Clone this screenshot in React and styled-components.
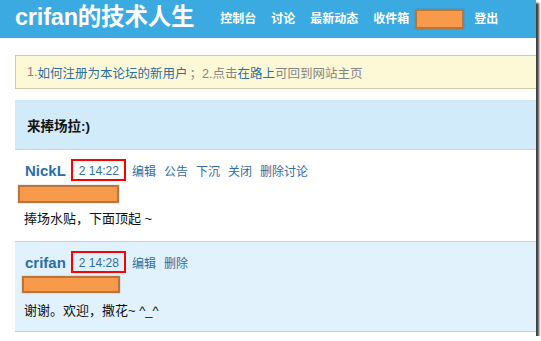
import React from 'react'
import styled, { createGlobalStyle } from 'styled-components'

const GlobalStyle = createGlobalStyle`
  html, body {
    margin: 0;
    padding: 0;
    background: #fff;
  }
  body {
    font-family: "Liberation Sans", "Noto Sans CJK SC", sans-serif;
  }
`

const Frame = styled.div`
  width: 536px;
  height: 336px;
  overflow: hidden;
  background: #fff;
  box-shadow: 3px 3px 2px rgba(0, 0, 0, 0.75);
`

const Header = styled.header`
  height: 38px;
  background: #3aaae1;
  display: flex;
  align-items: center;
  padding-left: 15px;
  color: #fff;
`

const Brand = styled.div`
  font-size: 23.5px;
  font-weight: bold;
  letter-spacing: -0.2px;
  margin-right: 26px;
  line-height: 1;
  margin-top: -2px;
`

const Nav = styled.nav`
  display: flex;
  align-items: center;
  gap: 15px;
`

const NavItem = styled.span`
  font-size: 12px;
  font-weight: bold;
  line-height: 1;
`

const Masked = styled.span`
  display: block;
  box-sizing: border-box;
  width: ${p => p.$w}px;
  height: ${p => p.$h}px;
  margin-left: ${p => p.$ml || 0}px;
  margin-right: ${p => p.$mr || 0}px;
  background: #f89a4b;
  border: 2px solid #b9753a;
  box-shadow: 0 0 1px rgba(120, 70, 20, 0.6);
`

const Main = styled.main`
  padding-left: 15px;
`

const Notice = styled.div`
  margin-top: 17px;
  height: 34px;
  box-sizing: border-box;
  margin-right: -4px;
  background: #fdf8d6;
  border: 1px solid #d3caa4;
  display: flex;
  align-items: center;
  padding-left: 11px;
  font-size: 12.5px;
  color: #858585;
  white-space: pre;
`

const TextLink = styled.span`
  color: #2b6fa3;
`

// full-width punctuation sits a little right of its cell in the original font
const Punct = styled.span`
  margin-left: 2px;
`

const Section = styled.div`
  margin-top: 11px;
  height: 49px;
  background: #d1ebfb;
  border-bottom: 1px solid #b2d9f1;
  display: flex;
  align-items: center;
  padding-left: 12px;
  font-size: 13.5px;
  font-weight: bold;
  color: #111;
`

const Post = styled.div`
  background: ${p => (p.$alt ? '#e1f2fc' : '#fff')};
  border-top: ${p => (p.$alt ? '1px solid #c4d0d9' : 'none')};
  border-bottom: ${p => (p.$alt ? '1px solid #c4d0d9' : 'none')};
  padding: 9px 0 ${p => (p.$alt ? 11 : 13)}px 10px;
`

const Meta = styled.div`
  display: flex;
  align-items: center;
  height: 22px;
`

const Author = styled.span`
  font-size: 15px;
  font-weight: bold;
  color: #2b6ea6;
  margin-right: 5px;
`

const Stamp = styled.span`
  box-sizing: border-box;
  height: 22px;
  display: flex;
  align-items: center;
  padding: 1px 5px 0 6px;
  border: 2px solid #ff0000;
  font-size: 12px;
  color: #2f6fa3;
  margin-right: 6px;
`

const Actions = styled.div`
  display: flex;
  gap: 8px;
  font-size: 12px;
  color: #2f6d9f;
`

const Body = styled.p`
  margin: ${p => p.$mt}px 0 0 -1px;
  font-size: 13px;
  line-height: 18px;
  color: #111;
`

const RedactWrap = styled.div`
  margin-top: ${p => p.$mt}px;
`

const posts = [
  {
    author: 'NickL',
    time: '2 14:22',
    actions: ['编辑', '公告', '下沉', '关闭', '删除讨论'],
    mask: { w: 101, h: 18, ml: -7, mt: 4 },
    bodyTop: 7,
    text: '捧场水贴，下面顶起 ~',
  },
  {
    author: 'crifan',
    time: '2 14:28',
    actions: ['编辑', '删除'],
    mask: { w: 98, h: 17, ml: -3, mt: 3 },
    bodyTop: 9,
    text: '谢谢。欢迎，撒花~ ^_^',
    alt: true,
  },
]

const App = () => (
  <>
    <GlobalStyle />
    <Frame>
      <Header>
        <Brand>crifan的技术人生</Brand>
        <Nav>
          <NavItem>控制台</NavItem>
          <NavItem>讨论</NavItem>
          <NavItem>最新动态</NavItem>
          <NavItem>收件箱</NavItem>
          <Masked $w={49} $h={20} $ml={-9} $mr={-5} />
          <NavItem>登出</NavItem>
        </Nav>
      </Header>
      <Main>
        <Notice>
          1.<TextLink>如何注册为本论坛的新用户</TextLink><Punct>；</Punct>2.点击<TextLink>在路上</TextLink>可回到网站主页
        </Notice>
        <Section>来捧场拉:)</Section>
        {posts.map(p => (
          <Post key={p.author} $alt={p.alt}>
            <Meta>
              <Author>{p.author}</Author>
              <Stamp>{p.time}</Stamp>
              <Actions>
                {p.actions.map(a => (
                  <span key={a}>{a}</span>
                ))}
              </Actions>
            </Meta>
            <RedactWrap $mt={p.mask.mt}>
              <Masked $w={p.mask.w} $h={p.mask.h} $ml={p.mask.ml} />
            </RedactWrap>
            <Body $mt={p.bodyTop}>{p.text}</Body>
          </Post>
        ))}
      </Main>
    </Frame>
  </>
)

export default App
